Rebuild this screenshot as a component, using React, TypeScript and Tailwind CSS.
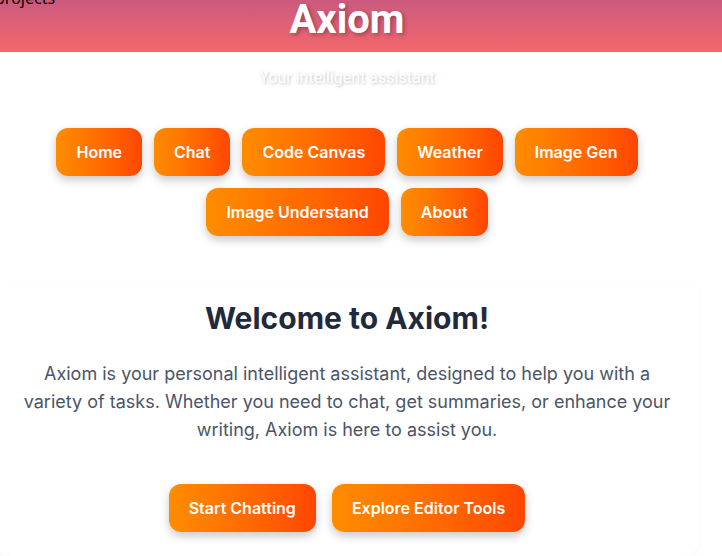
const NAV = ["Home", "Chat", "Code Canvas", "Weather", "Image Gen", "Image Understand", "About"];

const btn =
  "rounded-xl bg-gradient-to-r from-[#ff8c00] to-[#ff4500] px-5 py-3 text-base leading-6 font-semibold text-white shadow-[0_4px_10px_rgba(0,0,0,0.22)]";

export default function App() {
  return (
    <div className="min-h-screen bg-white font-['Inter',sans-serif] overflow-hidden">
      <header className="relative h-[52px] w-full bg-gradient-to-b from-[#cb5a7e] to-[#f4676a]">
        <a className="absolute top-[-14px] left-[-5px] font-['Noto_Sans',sans-serif] text-base leading-6 text-black">
          projects
        </a>
        <div className="flex w-[694px] justify-center">
          <h1 className="font-['Roboto',sans-serif] text-[40px] leading-[40px] font-bold text-white [text-shadow:2px_2px_4px_rgba(0,0,0,0.3)]">
            Axiom
          </h1>
        </div>
      </header>

      <div className="flex w-[694px] flex-col items-center">
        <p className="mt-[14px] font-['Roboto',sans-serif] text-base leading-6 text-white [text-shadow:1px_1px_3px_rgba(0,0,0,0.25)]">
          Your intelligent assistant
        </p>

        <nav className="mt-[38px] flex flex-wrap justify-center gap-3 px-4">
          {NAV.map((n) => (
            <button key={n} className={btn}>
              {n}
            </button>
          ))}
        </nav>

        <section className="mt-[47px] flex w-[704px] shrink-0 flex-col items-center rounded-2xl bg-white px-6 pt-[17px] pb-6 shadow-[0_2px_10px_rgba(0,0,0,0.03)]">
          <h2 className="text-[30px] leading-9 font-bold text-[#1f2a3c]">Welcome to Axiom!</h2>
          <p className="mt-6 text-center text-lg leading-7 text-[#4a5568]">
            Axiom is your personal intelligent assistant, designed to help you with a variety of tasks. Whether you
            need to chat, get summaries, or enhance your writing, Axiom is here to assist you.
          </p>
          <div className="mt-10 flex gap-4">
            <button className={btn}>Start Chatting</button>
            <button className={btn}>Explore Editor Tools</button>
          </div>
        </section>
      </div>
    </div>
  );
}
